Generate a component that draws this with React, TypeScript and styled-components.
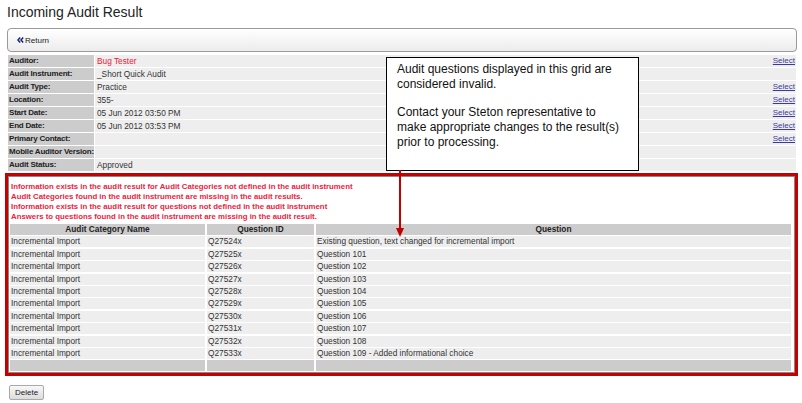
import React from 'react';
import styled, { createGlobalStyle } from 'styled-components';

const GlobalStyle = createGlobalStyle`
  body {
    margin: 0;
    background: #fff;
    font-family: "Liberation Sans", Arial, sans-serif;
    color: #333;
  }
`;

const Page = styled.div`
  position: relative;
  width: 802px;
  height: 403px;
  overflow: hidden;
`;

const Title = styled.h1`
  margin: 0;
  padding: 4px 0 0 7px;
  height: 25px;
  box-sizing: border-box;
  font-size: 14px;
  font-weight: normal;
  color: #222;
`;

const Toolbar = styled.div`
  margin: 3px 5px 0 7px;
  height: 24px;
  box-sizing: border-box;
  border: 1px solid #9a9a9a;
  border-radius: 4px;
  background: linear-gradient(#ffffff, #ececec);
  display: flex;
  align-items: center;
  padding-left: 9px;
`;

const ReturnLink = styled.span`
  font-size: 8px;
  color: #222;
  display: flex;
  align-items: center;
  gap: 1px;
`;

const Details = styled.div`
  margin: 3px 6px 0 8px;
  display: grid;
  grid-template-columns: 86px 1fr;
  column-gap: 1px;
  row-gap: 1px;
`;

const Label = styled.div`
  background: #cccccc;
  height: 12px;
  font-size: 8px;
  letter-spacing: -0.2px;
  font-weight: bold;
  line-height: 12px;
  padding-left: 1px;
  color: #222;
  white-space: nowrap;
`;

const Value = styled.div<{ $red?: boolean }>`
  background: #eeeeee;
  height: 12px;
  font-size: 8.3px;
  line-height: 12px;
  padding-left: 2px;
  color: ${(p) => (p.$red ? '#e8203a' : '#333')};
  display: flex;
  justify-content: space-between;
`;

const Select = styled.span`
  color: #3a3aa0;
  text-decoration: underline;
  font-size: 8px;
  margin-right: 1px;
`;

const ErrorBox = styled.div`
  margin: 2px 4px 0 5px;
  height: 203px;
  box-sizing: border-box;
  border: 3px solid #c40000;
  box-shadow: inset 0 0 0 1px #888;
  padding: 6px 4px 0 2px;
`;

const Messages = styled.div`
  color: #f0203a;
  font-size: 7.8px;
  font-weight: bold;
  line-height: 10px;
  padding-left: 1px;
`;

const Grid = styled.div`
  margin-top: 2px;
  display: grid;
  grid-template-columns: 195px 107px 1fr;
  column-gap: 2px;
  row-gap: 1.4px;
`;

const HeadCell = styled.div`
  background: #cccccc;
  height: 11px;
  line-height: 11px;
  font-size: 8.3px;
  font-weight: bold;
  text-align: center;
  color: #222;
`;

const Cell = styled.div<{ $footer?: boolean }>`
  background: ${(p) => (p.$footer ? '#cccccc' : '#eeeeee')};
  height: 11px;
  line-height: 11px;
  font-size: 8.3px;
  padding-left: 1px;
  color: #333;
  white-space: nowrap;
`;

const DeleteButton = styled.button`
  margin: 9px 0 0 9px;
  height: 15px;
  padding: 0 5px;
  font-family: inherit;
  font-size: 8px;
  color: #222;
  border: 1px solid #aaa;
  border-radius: 2px;
  background: linear-gradient(#f8f8f8, #dcdcdc);
`;

const Callout = styled.div`
  position: absolute;
  left: 386px;
  top: 57px;
  width: 253px;
  height: 114px;
  box-sizing: border-box;
  border: 1px solid #000;
  background: #fff;
  padding: 4px 0 0 10px;
  font-size: 12px;
  line-height: 15px;
  color: #111;
  p {
    margin: 0 0 13px 0;
  }
`;

const Arrow = styled.svg`
  position: absolute;
  left: 395px;
  top: 170px;
`;

const details: [string, string, boolean?, boolean?][] = [
  ['Auditor:', 'Bug Tester', true, true],
  ['Audit Instrument:', '_Short Quick Audit', false, false],
  ['Audit Type:', 'Practice', false, true],
  ['Location:', '355-', false, true],
  ['Start Date:', '05 Jun 2012 03:50 PM', false, true],
  ['End Date:', '05 Jun 2012 03:53 PM', false, true],
  ['Primary Contact:', '', false, true],
  ['Mobile Auditor Version:', '', false, false],
  ['Audit Status:', 'Approved', false, false],
];

const questions = [
  ['Q27524x', 'Existing question, text changed for incremental import'],
  ['Q27525x', 'Question 101'],
  ['Q27526x', 'Question 102'],
  ['Q27527x', 'Question 103'],
  ['Q27528x', 'Question 104'],
  ['Q27529x', 'Question 105'],
  ['Q27530x', 'Question 106'],
  ['Q27531x', 'Question 107'],
  ['Q27532x', 'Question 108'],
  ['Q27533x', 'Question 109 - Added informational choice'],
];

const App: React.FC = () => {
  return (
    <Page>
      <GlobalStyle />
      <Title>Incoming Audit Result</Title>
      <Toolbar>
        <ReturnLink>
          <svg width="7" height="6" viewBox="0 0 7 6">
            <path d="M3.2 0.5 L1 3 L3.2 5.5 M6.2 0.5 L4 3 L6.2 5.5" fill="none" stroke="#1a2a7a" strokeWidth="1.5" />
          </svg>
          Return
        </ReturnLink>
      </Toolbar>
      <Details>
        {details.map(([label, value, red, select]) => (
          <React.Fragment key={label}>
            <Label>{label}</Label>
            <Value $red={red}>
              <span>{value}</span>
              {select && <Select>Select</Select>}
            </Value>
          </React.Fragment>
        ))}
      </Details>
      <ErrorBox>
        <Messages>
          <div>Information exists in the audit result for Audit Categories not defined in the audit instrument</div>
          <div>Audit Categories found in the audit instrument are missing in the audit results.</div>
          <div>Information exists in the audit result for questions not defined in the audit instrument</div>
          <div>Answers to questions found in the audit instrument are missing in the audit result.</div>
        </Messages>
        <Grid>
          <HeadCell>Audit Category Name</HeadCell>
          <HeadCell>Question ID</HeadCell>
          <HeadCell>Question</HeadCell>
          {questions.map(([id, q]) => (
            <React.Fragment key={id}>
              <Cell>Incremental Import</Cell>
              <Cell>{id}</Cell>
              <Cell>{q}</Cell>
            </React.Fragment>
          ))}
          <Cell $footer />
          <Cell $footer />
          <Cell $footer />
        </Grid>
      </ErrorBox>
      <DeleteButton>Delete</DeleteButton>
      <Callout>
        <p>
          Audit questions displayed in this grid are
          <br />
          considered invalid.
        </p>
        <p>
          Contact your Steton representative to
          <br />
          make appropriate changes to the result(s)
          <br />
          prior to processing.
        </p>
      </Callout>
      <Arrow width="10" height="68" viewBox="0 0 10 68">
        <line x1="5" y1="0" x2="5" y2="60" stroke="#c00000" strokeWidth="2" />
        <polygon points="1,58 9,58 5,67" fill="#c00000" />
      </Arrow>
    </Page>
  );
};

export default App;
